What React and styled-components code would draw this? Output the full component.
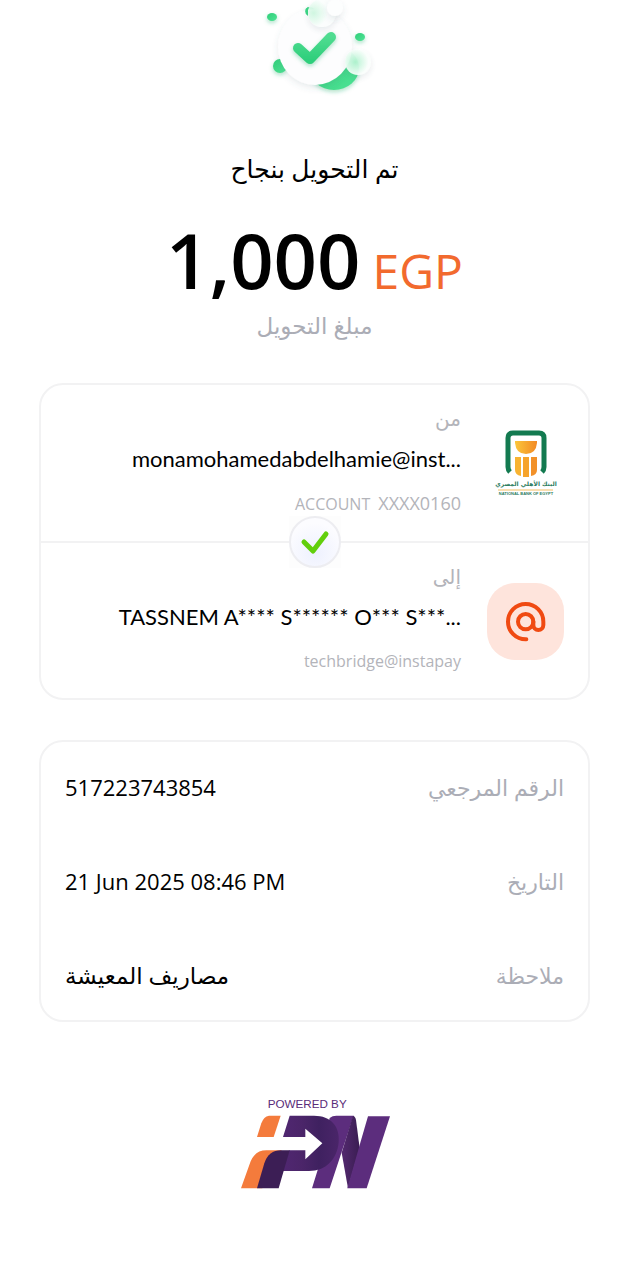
import React from "react";
import styled, { createGlobalStyle } from "styled-components";

const GlobalStyle = createGlobalStyle`
  * { box-sizing: border-box; }
  body {
    margin: 0;
    background: #fff;
    color: #000;
    font-family: "Open Sans", "DejaVu Sans", sans-serif;
  }
`;

const Page = styled.main`
  display: flex;
  flex-direction: column;
  align-items: center;
  padding: 0 39px 80px;
`;

const Title = styled.h1`
  margin: 38px 0 0;
  font-size: 25px;
  line-height: 40px;
  font-weight: 400;
`;

const Amount = styled.p`
  display: flex;
  align-items: baseline;
  gap: 12px;
  margin: 36px 0 0;
  line-height: 72px;
`;

const Value = styled.strong`
  font-size: 76px;
  font-weight: 600;
`;

const Currency = styled.span`
  font-size: 48px;
  color: #f26a2e;
`;

const Caption = styled.p`
  margin: 0;
  font-size: 23px;
  line-height: 36px;
  color: #abadb6;
`;

const Card = styled.section`
  width: 100%;
  margin-top: 40px;
  border: 2px solid #f2f2f3;
  border-radius: 24px;
`;

const Party = styled.div`
  display: flex;
  align-items: center;
  gap: 26px;
  padding: 18px 24px 17px;
`;

const PartyIcon = styled.div`
  display: flex;
  flex: none;
  width: 77px;
  height: 77px;
  border-radius: 28px;
  background: ${(p) => p.$fill || "transparent"};
`;

const PartyText = styled.div`
  flex: 1;
  min-width: 0;
`;

const Label = styled.div`
  font-size: 20px;
  line-height: 32px;
  color: #b3b4ba;
`;

const Name = styled.div`
  font-family: Lato, sans-serif;
  font-size: 22px;
  line-height: 48px;
  text-align: right;
  white-space: nowrap;
  overflow: hidden;
`;

const Handle = styled.div`
  display: flex;
  justify-content: flex-end;
  align-items: baseline;
  gap: 8px;
  font-size: 16px;
  line-height: 40px;
  color: #b3b4ba;
`;

const AccountNumber = styled.span`
  font-size: 18px;
`;

const Divider = styled.div`
  position: relative;
  height: 2px;
  background: #f2f2f3;
`;

const Badge = styled.svg`
  position: absolute;
  top: 50%;
  left: 50%;
  transform: translate(-50%, -50%);
`;

const Details = styled.dl`
  display: flex;
  flex-direction: column;
  gap: 48px;
  margin: 0;
  padding: 22px 24px;
`;

const Detail = styled.div`
  display: flex;
  justify-content: space-between;
  font-size: 22px;
  line-height: 46px;
`;

const Term = styled.dt`
  color: #abadb6;
`;

const Data = styled.dd`
  margin: 0;
  font-size: ${(p) => (p.$arabic ? "23px" : "22px")};
`;

const Footer = styled.footer`
  display: flex;
  margin-top: 68px;
`;

function SuccessArt() {
  return (
    <svg width="130" height="110" viewBox="0 0 130 110" role="img" aria-label="نجاح">
      <defs>
        <linearGradient id="green" x1="0" y1="0" x2="1" y2="1">
          <stop offset="0" stopColor="#2fce78" />
          <stop offset="1" stopColor="#4fe396" />
        </linearGradient>
        <linearGradient id="tick" x1="0" y1="0" x2="0" y2="1">
          <stop offset="0" stopColor="#4fdc90" />
          <stop offset="1" stopColor="#2fcf7c" />
        </linearGradient>
        <radialGradient id="glass" cx=".4" cy=".5" r=".5">
          <stop offset="0" stopColor="#b4f3d1" />
          <stop offset="1" stopColor="#fafefc" />
        </radialGradient>
        <radialGradient id="clear" cx=".2" cy=".5" r=".5">
          <stop offset="0" stopColor="#cdf6df" />
          <stop offset="1" stopColor="#fbfefd" />
        </radialGradient>
        <filter id="soft" x="-50%" y="-50%" width="200%" height="200%">
          <feDropShadow dx="0" dy="3" stdDeviation="3" floodColor="#40606c" floodOpacity=".12" />
        </filter>
        <filter id="tint" x="-50%" y="-50%" width="200%" height="200%">
          <feDropShadow dx="0" dy="2" stdDeviation="2" floodColor="#1eaa63" floodOpacity=".35" />
        </filter>
      </defs>
      <g fill="url(#green)" filter="url(#tint)">
        <ellipse cx="22" cy="17" rx="5" ry="4" />
        <circle cx="60" cy="12" r="5" />
        <ellipse cx="110" cy="37" rx="5" ry="4" />
        <circle cx="30" cy="66" r="7" />
        <ellipse cx="84" cy="68" rx="25" ry="22" />
      </g>
      <ellipse cx="65" cy="47" rx="37" ry="38" fill="#fdfdfe" filter="url(#soft)" />
      <path d="M58 7 A5 5 0 0 0 58 16 Z" fill="#3bd584" />
      <circle cx="72" cy="13" r="14" fill="url(#clear)" opacity=".94" filter="url(#soft)" />
      <circle cx="85" cy="8" r="8" fill="#fdfefe" filter="url(#soft)" />
      <circle cx="108" cy="62" r="13" fill="url(#glass)" opacity=".94" filter="url(#soft)" />
      <path d="M48 48 L60 59 L81 37" fill="none" stroke="url(#tick)" strokeWidth="10" strokeLinecap="round" strokeLinejoin="round" filter="url(#tint)" />
    </svg>
  );
}

function BankLogo() {
  return (
    <svg width="77" height="77" viewBox="0 0 77 77" role="img" aria-label="National Bank of Egypt">
      <defs>
        <linearGradient id="gold" x1="0" y1="0" x2="1" y2="0">
          <stop offset="0" stopColor="#fbc63b" />
          <stop offset="1" stopColor="#f28a25" />
        </linearGradient>
      </defs>
      <path d="M23 47 Q21 45 21 42 V13 Q21 8 26 8 H52 Q57 8 57 13 V42 Q57 45 55 47" fill="none" stroke="#137a50" strokeWidth="5" />
      <path d="M28 16 H50 V18 Q49 29 39 29 Q29 29 28 18 Z" fill="url(#gold)" />
      <path d="M28 32 H34 V51 Q28 50 28 45 Z" fill="#f8b331" />
      <path d="M36 32 H42 V52 H36 Z" fill="#f6a42c" />
      <path d="M44 32 H50 V45 Q50 50 44 51 Z" fill="#f29129" />
      <text x="39" y="61" textAnchor="middle" direction="rtl" fontFamily="DejaVu Sans, sans-serif" fontSize="6" fontWeight="700" fill="#2c7d60">البنك الأهلي المصري</text>
      <path d="M11 65 H66" stroke="#f3bd62" strokeWidth="1" />
      <text x="39" y="70" textAnchor="middle" direction="ltr" fontFamily="Liberation Sans, sans-serif" fontSize="4" fontWeight="700" fill="#2c7d60">NATIONAL BANK OF EGYPT</text>
    </svg>
  );
}

function AtIcon() {
  return (
    <svg width="77" height="77" viewBox="0 0 231 231" fill="none" stroke="#f04a12" strokeWidth="12" strokeLinecap="round" strokeLinejoin="round" aria-hidden="true">
      <circle cx="116" cy="116" r="23" />
      <path d="M118 169 H116 A53 53 0 1 1 169 116 V126 A15 15 0 0 1 139 126 V116" />
    </svg>
  );
}

function CheckBadge() {
  return (
    <Badge width="52" height="52" viewBox="0 0 52 52" aria-hidden="true">
      <defs>
        <radialGradient id="badge" cx=".5" cy=".72" r=".6">
          <stop offset="0" stopColor="#eef1fe" />
          <stop offset="1" stopColor="#fcfcff" />
        </radialGradient>
      </defs>
      <rect width="52" height="52" fill="#fdfdfd" />
      <circle cx="26" cy="26" r="25" fill="url(#badge)" stroke="#ededf1" strokeWidth="2" />
      <path d="M15 26 L24 35 L37 18" fill="none" stroke="#62cf0c" strokeWidth="5" strokeLinecap="round" strokeLinejoin="round" />
    </Badge>
  );
}

function IpnLogo() {
  return (
    <svg width="153" height="110" viewBox="27 0 459 330" role="img" aria-label="Powered by IPN">
      <defs>
        <linearGradient id="bowl" x1="0" y1="0" x2="1" y2="0">
          <stop offset="0" stopColor="#502771" />
          <stop offset=".35" stopColor="#4b2569" />
          <stop offset=".65" stopColor="#3f2160" />
          <stop offset="1" stopColor="#4a2569" />
        </linearGradient>
        <linearGradient id="fold" x1="0" y1="0" x2="1" y2="0">
          <stop offset="0" stopColor="#53296f" />
          <stop offset="1" stopColor="#3a1d52" />
        </linearGradient>
      </defs>
      <text x="116" y="53" direction="ltr" fontFamily="Liberation Sans, sans-serif" fontSize="35" fill="#5a2c79">POWERED BY</text>
      <path d="M120 77 H155 L134 141 H84 L97 100 Q104 79 120 77 Z" fill="#f47b3c" />
      <path d="M158 181 L100 295 H36 L62 222 Q75 181 112 181 Z" fill="#f47b3c" />
      <path d="M322 77 H374 L302 295 H249 L266 240 L302 84 Q310 77 322 77 Z" fill="#5c2d7d" />
      <path d="M372 77 Q379 79 381 90 L392 175 L357 295 L338 188 Z" fill="url(#fold)" />
      <path d="M417 79 H483 L413 295 H355 L392 165 Z" fill="#5c2d7d" />
      <path d="M182 77 H255 C306 77 334 110 329 157 C324 209 291 243 240 243 H160 L180 181 H229 V208 L280 160 L229 116 V141 H162 Z" fill="url(#bowl)" />
      <path d="M84 295 L106 220 Q119 181 156 181 H182 L149 295 Z" fill="#3c1e55" />
    </svg>
  );
}

const details = [
  { term: "الرقم المرجعي", value: "517223743854" },
  { term: "التاريخ", value: "21 Jun 2025 08:46 PM" },
  { term: "ملاحظة", value: "مصاريف المعيشة", arabic: true },
];

export default function App() {
  return (
    <>
      <GlobalStyle />
      <Page dir="rtl" lang="ar">
        <SuccessArt />
        <Title>تم التحويل بنجاح</Title>
        <Amount dir="ltr">
          <Value>1,000</Value>
          <Currency>EGP</Currency>
        </Amount>
        <Caption>مبلغ التحويل</Caption>

        <Card>
          <Party>
            <PartyIcon><BankLogo /></PartyIcon>
            <PartyText>
              <Label>من</Label>
              <Name dir="ltr">monamohamedabdelhamie@inst...</Name>
              <Handle dir="ltr">
                <span>ACCOUNT</span>
                <AccountNumber>XXXX0160</AccountNumber>
              </Handle>
            </PartyText>
          </Party>
          <Divider><CheckBadge /></Divider>
          <Party>
            <PartyIcon $fill="#fee4dc"><AtIcon /></PartyIcon>
            <PartyText>
              <Label>إلى</Label>
              <Name dir="ltr">TASSNEM A**** S****** O*** S***...</Name>
              <Handle dir="ltr">techbridge@instapay</Handle>
            </PartyText>
          </Party>
        </Card>

        <Card>
          <Details>
            {details.map((d) => (
              <Detail key={d.term}>
                <Term>{d.term}</Term>
                <Data $arabic={d.arabic} dir={d.arabic ? "rtl" : "ltr"}>{d.value}</Data>
              </Detail>
            ))}
          </Details>
        </Card>

        <Footer><IpnLogo /></Footer>
      </Page>
    </>
  );
}
